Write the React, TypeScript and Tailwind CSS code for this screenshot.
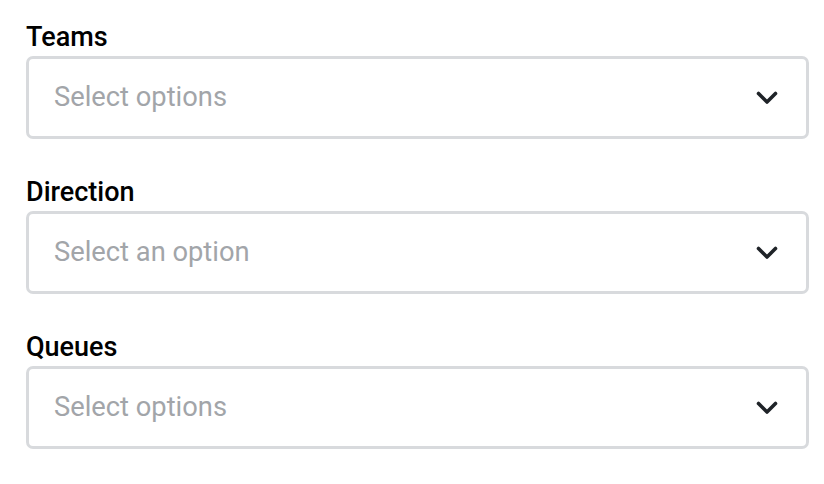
const fields = [
  { label: 'Teams', placeholder: 'Select options' },
  { label: 'Direction', placeholder: 'Select an option' },
  { label: 'Queues', placeholder: 'Select options' },
];

function Chevron() {
  return (
    <svg width="24" height="16" viewBox="0 0 24 16" fill="none" className="shrink-0">
      <path
        d="M3.5 3.5 L12 12 L20.5 3.5"
        stroke="#1f2328"
        strokeWidth="3.6"
        strokeLinecap="round"
        strokeLinejoin="round"
      />
    </svg>
  );
}

function SelectField({ label, placeholder }: { label: string; placeholder: string }) {
  return (
    <div className="flex flex-col">
      <label className="text-[27px] leading-[31px] font-medium text-black">{label}</label>
      <div className="mt-[3px] h-[83px] rounded-[7px] border-[3px] border-[#d8dadd] bg-white flex items-center justify-between pl-[25px] pr-[27px]">
        <span className="text-[27.3px] text-[#a2a5a9]">{placeholder}</span>
        <Chevron />
      </div>
    </div>
  );
}

export default function App() {
  return (
    <div
      className="w-[824px] h-[484px] bg-white pl-[26px] pr-[15px] pt-[22px] flex flex-col gap-[38px]"
      style={{ fontFamily: 'Roboto, "Liberation Sans", sans-serif' }}
    >
      {fields.map((f) => (
        <SelectField key={f.label} label={f.label} placeholder={f.placeholder} />
      ))}
    </div>
  );
}
